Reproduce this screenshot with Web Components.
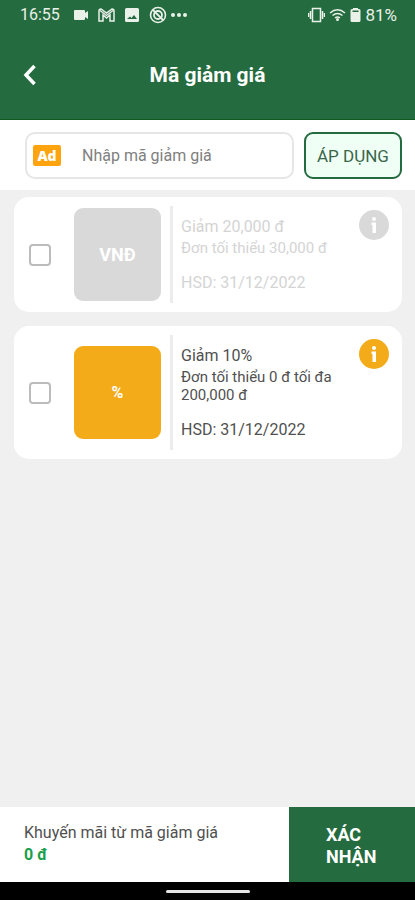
<!DOCTYPE html>
<html lang="vi">
<head>
<meta charset="utf-8">
<meta name="viewport" content="width=device-width, initial-scale=1">
<title>Mã giảm giá</title>
<style>
  :root {
    --green: #256b40;
    --orange: #f4ab1a;
    --grey: #d9d9d9;
  }
  body {
    margin: 0;
    background: #f0f0f0;
    font-family: Roboto, "Liberation Sans", sans-serif;
    font-size: 16px;
    color: #505050;
  }
</style>
</head>
<body>
<voucher-page>
  <voucher-card kind="VNĐ" name="Giảm 20,000 đ" expiry="31/12/2022" disabled>Đơn tối thiểu 30,000 đ</voucher-card>
  <voucher-card kind="%" name="Giảm 10%" expiry="31/12/2022">Đơn tối thiểu 0 đ tối đa 200,000 đ</voucher-card>
</voucher-page>

<script>
class StatusBar extends HTMLElement {
  constructor () {
    super()
    this.shadow = this.attachShadow({ mode: 'open' })
  }

  connectedCallback () {
    this.render()
  }

  render () {
    this.shadow.innerHTML =
      /* html */`
      <style>
        :host {
          display: flex;
          align-items: center;
          justify-content: space-between;
          height: 30px;
          padding: 0 18px 0 20px;
          color: #e9f1e8;
          line-height: 20px;
        }
        div {
          display: flex;
          align-items: center;
        }
        svg {
          display: block;
          fill: currentColor;
        }
        .left { gap: 10px; }
        .left span { margin-right: 4px; }
        .left div { gap: 3px; }
        .right { gap: 4px; }
        .right span { font-size: 17px; }
      </style>
      <div class="left">
        <span>16:55</span>
        <svg width="14" height="12" viewBox="0 0 14 12"><path d="M1 1h9q1 0 1 1v2l3-2v8l-3-2v2q0 1-1 1H1q-1 0-1-1V2q0-1 1-1z"/></svg>
        <svg width="17" height="14" viewBox="0 0 17 14"><path d="M1 13V3q0-2 2-2l5.500 4L14 1q2 0 2 2v10h-4V7l-3.500 3L5 7v6z" fill="none" stroke="currentColor" stroke-width="1.500"/><path d="M2 2.500l6.500 5L15 2.500" fill="none" stroke="currentColor" stroke-width="1.300"/></svg>
        <svg width="14" height="14" viewBox="0 0 14 14"><path fill-rule="evenodd" d="M1.500 0h11Q14 0 14 1.500v11q0 1.500-1.500 1.500h-11Q0 14 0 12.500v-11Q0 0 1.500 0zM2 11h10L9 7l-2.500 3L5 8.500z"/></svg>
        <div>
          <svg width="18" height="18" viewBox="0 0 18 18"><g fill="none" stroke="currentColor"><circle cx="9" cy="9" r="7.500" stroke-width="1.600"/><circle cx="9" cy="9" r="4" stroke-width="1.800"/><path d="M4 4l10 10" stroke-width="1.800"/></g></svg>
          <svg width="18" height="6" viewBox="0 0 18 6"><circle cx="3" cy="3" r="2"/><circle cx="9" cy="3" r="2"/><circle cx="15" cy="3" r="2"/></svg>
        </div>
      </div>
      <div class="right">
        <svg width="17" height="16" viewBox="0 0 17 16"><path d="M4.500 1.500h8v13h-8zM2.500 4v8M14.500 4v8M.5 6v4M16.500 6v4" fill="none" stroke="currentColor" stroke-width="1.500"/></svg>
        <svg width="17" height="14" viewBox="0 0 17 14"><path d="M1 5q7.500-6.500 15 0M3.500 7.500q5-4 10 0M6 10q2.500-2 5 0" fill="none" stroke="currentColor" stroke-width="1.500"/><circle cx="8.500" cy="11.500" r="1.500"/></svg>
        <svg width="11" height="16" viewBox="0 0 11 16"><path fill-rule="evenodd" d="M3 1h5v1h1q1.500 0 1.500 1.500v10Q10.500 15 9 15H2Q.5 15 .5 13.500v-10Q.5 2 2 2h1zM2.500 3.500v1.500h6V3.500z"/></svg>
        <span>81%</span>
      </div>
      `
  }
}

class PageHeader extends HTMLElement {
  constructor () {
    super()
    this.shadow = this.attachShadow({ mode: 'open' })
  }

  connectedCallback () {
    this.render()
  }

  render () {
    this.shadow.innerHTML =
      /* html */`
      <style>
        :host {
          display: block;
          border-bottom: 1px solid #14591f;
          background: var(--green);
          color: #fff;
        }
        .bar {
          display: grid;
          grid-template-columns: 60px 1fr 60px;
          align-items: center;
          height: 89px;
        }
        button {
          height: 48px;
          padding: 0;
          border: 0;
          background: none;
          color: inherit;
        }
        svg {
          display: block;
          margin: 0 auto;
        }
        h1 {
          margin: 0;
          font-size: 21px;
          line-height: 24px;
          text-align: center;
        }
      </style>
      <status-bar></status-bar>
      <div class="bar">
        <button type="button" aria-label="Quay lại">
          <svg width="16" height="22" viewBox="0 0 16 22"><path d="M12.500 2L4 11l8.500 9" fill="none" stroke="currentColor" stroke-width="3.500"/></svg>
        </button>
        <h1><slot></slot></h1>
      </div>
      `
  }
}

class CodeForm extends HTMLElement {
  constructor () {
    super()
    this.shadow = this.attachShadow({ mode: 'open' })
  }

  connectedCallback () {
    this.render()
  }

  render () {
    this.shadow.innerHTML =
      /* html */`
      <style>
        :host {
          display: block;
          background: #fff;
        }
        form {
          display: flex;
          gap: 10px;
          padding: 12px 13px 11px 25px;
        }
        label {
          display: flex;
          flex: 1;
          align-items: center;
          gap: 21px;
          min-width: 0;
          box-sizing: border-box;
          height: 47px;
          padding: 0 6px;
          border: 2px solid #e6e6e6;
          border-radius: 10px;
        }
        .ad {
          flex: none;
          width: 28px;
          border-radius: 2px;
          background: #ffa30f;
          color: #fff;
          font: 800 14px/21px "Open Sans", sans-serif;
          text-align: center;
        }
        input {
          flex: 1;
          min-width: 0;
          padding: 0;
          border: 0;
          outline: 0;
          background: none;
          font: inherit;
          color: #444;
        }
        input::placeholder {
          color: #808080;
          opacity: 1;
        }
        button {
          flex: none;
          box-sizing: border-box;
          width: 98px;
          padding: 0;
          border: 2px solid var(--green);
          border-radius: 9px;
          background: #f0fff5;
          color: #3a664b;
          font: 17px/22px Roboto, sans-serif;
        }
      </style>
      <form>
        <label>
          <span class="ad" aria-hidden="true">Ad</span>
          <input type="text" aria-label="Mã giảm giá" placeholder="Nhập mã giảm giá">
        </label>
        <button type="button">ÁP DỤNG</button>
      </form>
      `
  }
}

class VoucherCard extends HTMLElement {
  constructor () {
    super()
    this.shadow = this.attachShadow({ mode: 'open' })
  }

  connectedCallback () {
    this.render()
  }

  render () {
    const name = this.getAttribute('name')
    this.shadow.innerHTML =
      /* html */`
      <style>
        :host {
          --tint: var(--orange);
          display: grid;
          grid-template-columns: 22px 87px 3px 1fr 30px;
          align-items: center;
          padding: 9px 13px 9px 15px;
          border-radius: 15px;
          background: #fff;
        }
        :host([disabled]) {
          --tint: var(--grey);
          color: #d4d4d4;
        }
        input {
          appearance: none;
          width: 22px;
          height: 22px;
          margin: 0;
          border: 2px solid #bcbcbc;
          border-radius: 4px;
          background: #fff;
        }
        input:checked {
          background: var(--tint);
        }
        .tile {
          display: flex;
          align-items: center;
          justify-content: center;
          height: 93px;
          margin: 0 -23px 0 23px;
          border-radius: 9px;
          background: var(--tint);
          color: #fff;
          font-weight: 700;
        }
        :host([disabled]) .tile {
          font-size: 18px;
        }
        .rule {
          align-self: stretch;
          margin: 0 -32px 0 32px;
          background: #ececec;
        }
        .info {
          padding: 10px 0 9px 40px;
        }
        h2, p {
          margin: 0;
          font-size: 16px;
          font-weight: 400;
          line-height: 22px;
        }
        .terms {
          margin: 1px 0 15px;
          font-size: 15px;
          line-height: 18px;
        }
        button {
          align-self: start;
          width: 30px;
          height: 30px;
          margin-top: 4px;
          padding: 0;
          border: 0;
          background: none;
        }
        svg {
          display: block;
        }
      </style>
      <input type="checkbox" aria-label="${name}">
      <div class="tile">${this.getAttribute('kind')}</div>
      <div class="rule"></div>
      <div class="info">
        <h2>${name}</h2>
        <p class="terms"><slot></slot></p>
        <p>HSD: ${this.getAttribute('expiry')}</p>
      </div>
      <button type="button" aria-label="Chi tiết ${name}">
        <svg width="30" height="30" viewBox="0 0 30 30">
          <circle cx="15" cy="15" r="15" fill="var(--tint)"/>
          <circle cx="15" cy="9" r="2" fill="#fff"/>
          <path d="M12.500 12.500H17V23h-3.500v-8h-1z" fill="#fff"/>
        </svg>
      </button>
      `
  }
}

class ConfirmBar extends HTMLElement {
  constructor () {
    super()
    this.shadow = this.attachShadow({ mode: 'open' })
  }

  connectedCallback () {
    this.render()
  }

  render () {
    this.shadow.innerHTML =
      /* html */`
      <style>
        :host {
          display: flex;
          min-height: 75px;
          background: #fff;
        }
        .total {
          flex: 1;
          padding: 15px 0 15px 24px;
          line-height: 22px;
        }
        strong {
          display: block;
          color: #18a04a;
          font-weight: 700;
        }
        button {
          flex: none;
          width: 126px;
          padding: 2px 36px 0 37px;
          border: 0;
          background: var(--green);
          color: #fff;
          font: 700 18px/22px Roboto, sans-serif;
          text-align: left;
        }
      </style>
      <div class="total">
        Khuyến mãi từ mã giảm giá
        <strong>0 đ</strong>
      </div>
      <button type="button">XÁC NHẬN</button>
      `
  }
}

class VoucherPage extends HTMLElement {
  constructor () {
    super()
    this.shadow = this.attachShadow({ mode: 'open' })
  }

  connectedCallback () {
    this.render()
  }

  render () {
    this.shadow.innerHTML =
      /* html */`
      <style>
        :host {
          display: flex;
          flex-direction: column;
          min-height: 100vh;
        }
        main {
          display: flex;
          flex: 1;
          flex-direction: column;
          gap: 14px;
          padding: 7px 13px 14px 14px;
        }
        .gesture {
          display: flex;
          align-items: center;
          justify-content: center;
          height: 18px;
          background: #000;
        }
        .gesture span {
          width: 84px;
          height: 3px;
          border-radius: 2px;
          background: #e4e4e4;
        }
      </style>
      <page-header>Mã giảm giá</page-header>
      <code-form></code-form>
      <main><slot></slot></main>
      <confirm-bar></confirm-bar>
      <div class="gesture"><span></span></div>
      `
  }
}

customElements.define('status-bar', StatusBar)
customElements.define('page-header', PageHeader)
customElements.define('code-form', CodeForm)
customElements.define('voucher-card', VoucherCard)
customElements.define('confirm-bar', ConfirmBar)
customElements.define('voucher-page', VoucherPage)
</script>
</body>
</html>
